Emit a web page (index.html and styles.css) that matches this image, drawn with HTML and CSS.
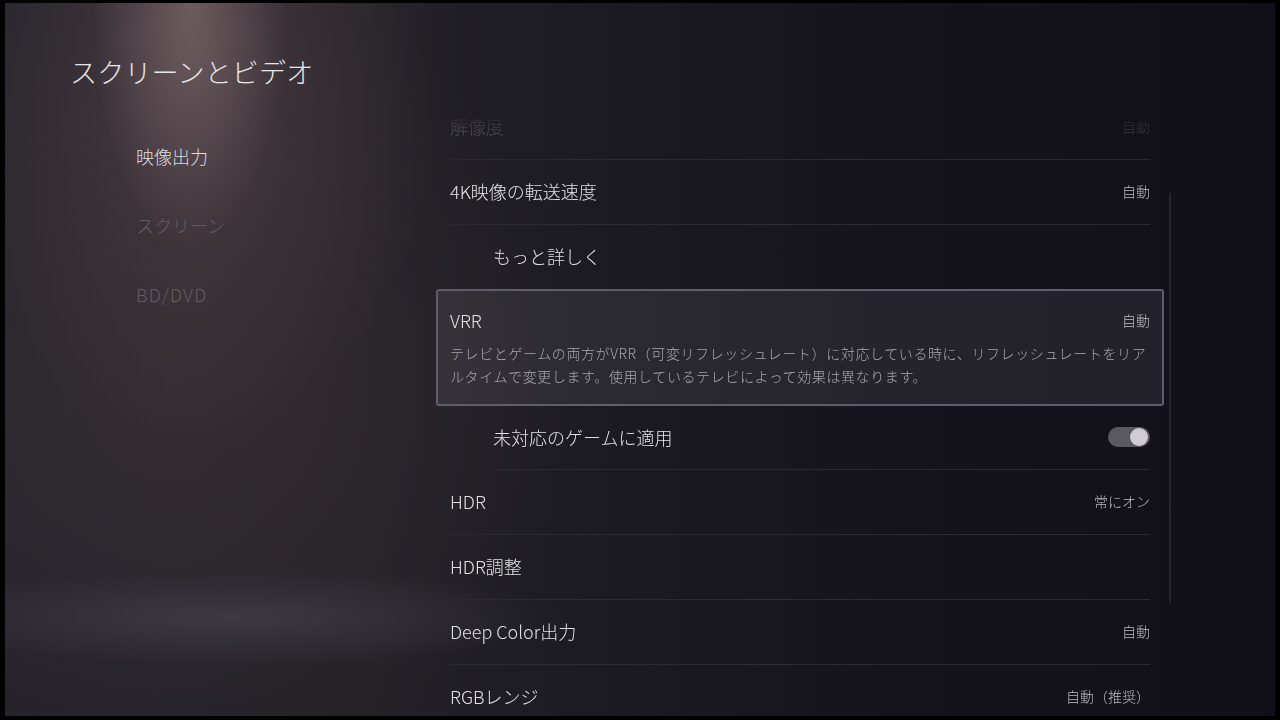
FILE: index.html
```html
<!DOCTYPE html>
<html lang="ja">
<head>
  <meta charset="UTF-8">
  <meta name="viewport" content="width=device-width, initial-scale=1.0">
  <title>スクリーンとビデオ</title>
  <link rel="stylesheet" href="styles.css">
</head>
<body>
  <div class="screen">
    <header class="header">
      <h1>スクリーンとビデオ</h1>
    </header>

    <div class="main">
      <ul class="side-nav">
        <li class="active">映像出力</li>
        <li>スクリーン</li>
        <li class="latin">BD/DVD</li>
      </ul>

      <div class="list">
        <div class="row">
          <span class="label">解像度</span>
          <span class="value">自動</span>
        </div>
        <div class="row">
          <span class="label">4K映像の転送速度</span>
          <span class="value">自動</span>
        </div>
        <div class="row sub no-line">
          <span class="label">もっと詳しく</span>
        </div>
        <div class="focus-box">
          <div class="focus-head">
            <span class="label">VRR</span>
            <span class="value">自動</span>
          </div>
          <p class="desc">テレビとゲームの両方がVRR（可変リフレッシュレート）に対応している時に、リフレッシュレートをリアルタイムで変更します。使用しているテレビによって効果は異なります。</p>
        </div>
        <div class="row sub short">
          <span class="label">未対応のゲームに適用</span>
          <span class="toggle on"><span class="knob"></span></span>
        </div>
        <div class="row">
          <span class="label">HDR</span>
          <span class="value">常にオン</span>
        </div>
        <div class="row">
          <span class="label">HDR調整</span>
        </div>
        <div class="row">
          <span class="label">Deep Color出力</span>
          <span class="value">自動</span>
        </div>
        <div class="row">
          <span class="label">RGBレンジ</span>
          <span class="value">自動（推奨）</span>
        </div>
      </div>
    </div>

    <div class="scrollbar"></div>
  </div>
</body>
</html>
```

FILE: styles.css
```css
:root {
  --text: #e2e2e6;
  --text-dim: #bcbcc4;
  --desc: #a8a8b2;
  --nav-off: #625d64;
  --line: #2a2a33;
}

* {
  box-sizing: border-box;
}

html,
body {
  margin: 0;
  width: 1280px;
  height: 720px;
  overflow: hidden;
  background: #000;
}

body {
  font-family: "Noto Sans CJK JP", "Noto Sans", sans-serif;
  font-weight: 300;
  color: var(--text);
}

.screen {
  position: relative;
  margin: 3px 5px 0 5px;
  height: 713px;
  overflow: hidden;
  background:
    radial-gradient(ellipse 130px 330px at 185px 0, rgba(170, 140, 140, 0.42), transparent 75%),
    radial-gradient(ellipse 330px 520px at 190px 60px, rgba(110, 90, 95, 0.42), transparent 75%),
    radial-gradient(ellipse 420px 60px at 230px 615px, rgba(95, 92, 108, 0.35), transparent 80%),
    radial-gradient(ellipse 500px 520px at 170px 380px, rgba(60, 50, 56, 0.65), transparent 80%),
    linear-gradient(90deg, #25222a 0%, #242127 28%, #1b1a22 48%, #15141c 70%, #111018 100%);
}

.header {
  height: 92px;
  padding: 51px 0 0 65px;
}

.header h1 {
  margin: 0;
  font-size: 27px;
  font-weight: 300;
  line-height: 36px;
  color: #e6e6e8;
  letter-spacing: 0.2px;
}

.main {
  display: grid;
  grid-template-columns: 445px 700px;
  height: 621px;
}

.side-nav {
  list-style: none;
  margin: 0;
  padding: 49px 0 0 131px;
  display: flex;
  flex-direction: column;
  gap: 45px;
}

.side-nav li {
  font-size: 18px;
  line-height: 24px;
  color: var(--nav-off);
}

.side-nav li.latin {
  letter-spacing: 1.2px;
}

.side-nav li.active {
  color: #dedde0;
}

.list {
  height: 621px;
  overflow: hidden;
  -webkit-mask-image: linear-gradient(to bottom, rgba(0, 0, 0, 0) 0, rgba(0, 0, 0, 0.05) 22px, rgba(0, 0, 0, 0.3) 46px, #000 66px);
  mask-image: linear-gradient(to bottom, rgba(0, 0, 0, 0) 0, rgba(0, 0, 0, 0.05) 22px, rgba(0, 0, 0, 0.3) 46px, #000 66px);
  padding: 0 14px;
  margin: 0 -14px;
}

.row {
  display: flex;
  justify-content: space-between;
  align-items: center;
  height: 65px;
  padding-bottom: 2px;
  border-bottom: 1px solid var(--line);
}

.row.sub {
  margin-left: 43px;
}

.row.no-line {
  height: 64px;
  border-bottom-color: transparent;
}

.row.short {
  height: 64px;
}

.label {
  font-size: 18px;
  line-height: 24px;
  color: var(--text);
}

.value {
  font-size: 14px;
  line-height: 20px;
  color: var(--text-dim);
}

.focus-box {
  margin: 0 -14px;
  height: 117px;
  padding: 17px 12px 16px;
  border: 2px solid #5e5e6a;
  border-radius: 3px;
  background: rgba(255, 255, 255, 0.07);
}

.focus-head {
  display: flex;
  justify-content: space-between;
  align-items: center;
  height: 24px;
}

.desc {
  margin: 10px 0 0;
  font-size: 14px;
  line-height: 23px;
  color: var(--desc);
  letter-spacing: 0.6px;
}

.toggle {
  position: relative;
  width: 42px;
  height: 20px;
  border-radius: 10px;
  background: #5a5961;
}

.toggle .knob {
  position: absolute;
  top: 1px;
  right: 2px;
  width: 18px;
  height: 18px;
  border-radius: 50%;
  background: #cfcdd3;
}

.scrollbar {
  position: absolute;
  left: 1164px;
  top: 190px;
  width: 2px;
  height: 410px;
  background: #24242c;
}
```
